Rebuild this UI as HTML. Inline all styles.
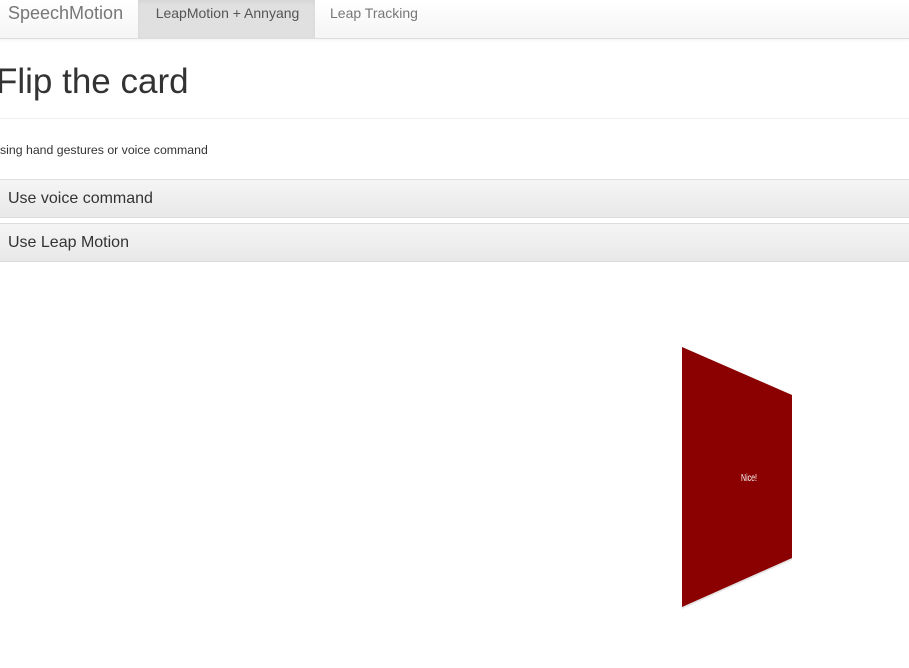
<!DOCTYPE html>
<html><head><meta charset="utf-8"><style>
body{margin:0;width:909px;height:668px;overflow:hidden;background:#fff;font-family:"Liberation Sans",sans-serif;position:relative}
.nav{position:absolute;left:0;top:0;width:909px;height:38px;background:linear-gradient(#fff,#f5f5f5);border-bottom:1px solid #ddd;box-shadow:0 1px 3px rgba(0,0,0,.06)}
.nav span{position:absolute;top:0;height:38px;line-height:27px;color:#777;font-size:14px}
.brand{left:8px;font-size:18px!important;line-height:26px!important}
.act{left:138px;width:177px;background:#e0e0e0;text-align:center;color:#555!important;box-shadow:inset 0 2px 4px rgba(0,0,0,.05);text-indent:2px}
h1{position:absolute;left:-4px;top:62px;margin:0;font-weight:normal;font-size:35px;color:#333}
.hr{position:absolute;left:0;top:118px;width:909px;border-top:1px solid #eee}
.p{position:absolute;left:0;top:143px;font-size:12.3px;color:#333}
.bar{position:absolute;left:0;width:909px;height:37px;background:linear-gradient(#f5f5f5,#e8e8e8);border-top:1px solid #ddd;border-bottom:1px solid #ddd;font-size:16px;color:#333;line-height:37px;text-indent:8px}
</style></head><body>
<div class="nav"><span class="brand">SpeechMotion</span><span class="act">LeapMotion + Annyang</span><span style="left:330px">Leap Tracking</span></div>
<h1>Flip the card</h1>
<div class="hr"></div>
<div class="p">sing hand gestures or voice command</div>
<div class="bar" style="top:179px">Use voice command</div>
<div class="bar" style="top:223px">Use Leap Motion</div>
<svg style="position:absolute;left:0;top:0" width="909" height="668">
<polygon points="682,349 792,397 792,560 682,609" fill="#ccc" opacity=".5"/>
<polygon points="682,347 792,395 792,558 682,607" fill="#8b0000"/>
<text x="749" y="481" fill="#fff" font-size="10" font-family="Liberation Sans Narrow,Liberation Sans,sans-serif" text-anchor="middle" transform="translate(749 0) scale(.7 1) translate(-749 0)">Nice!</text>
</svg>
</body></html>
